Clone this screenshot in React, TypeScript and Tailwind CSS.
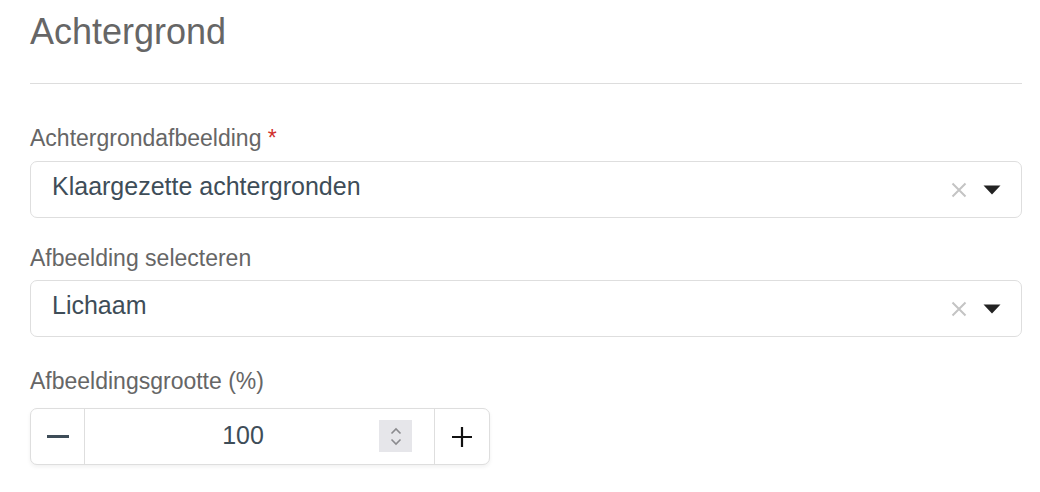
import React from "react";

function Caret() {
  return (
    <svg width="18" height="10" viewBox="0 0 18 10" className="block">
      <path d="M0.5 0.5 L17.5 0.5 L9 9.5 Z" fill="#222" />
    </svg>
  );
}

function Cross() {
  return (
    <svg width="16" height="16" viewBox="0 0 16 16" className="block">
      <path d="M1.5 1.5 L14.5 14.5 M14.5 1.5 L1.5 14.5" stroke="#c4c4c4" strokeWidth="2" />
    </svg>
  );
}

function SelectBox({ value }: { value: string }) {
  return (
    <div className="flex h-[57px] items-center rounded-[7px] border border-[#dedede] bg-white pl-[21px] pr-[20px]">
      <span className="mb-[7px] flex-1 text-[25px] leading-[30px] text-[#3e4d58]">{value}</span>
      <div className="mr-[16px]">
        <Cross />
      </div>
      <Caret />
    </div>
  );
}

export default function App() {
  return (
    <div
      className="min-h-[492px] w-[1040px] bg-white pl-[30px] pr-[18px]"
      style={{ fontFamily: '"Liberation Sans", Arial, sans-serif' }}
    >
      <div className="pt-[10px] text-[36px] leading-[44px] text-[#666]">Achtergrond</div>
      <div className="mt-[29px] h-px bg-[#dddddd]" />

      <div className="mt-[40px] text-[23px] leading-[28px] text-[#666]">
        Achtergrondafbeelding <span className="text-[#d0312d]">*</span>
      </div>
      <div className="mt-[9px]">
        <SelectBox value="Klaargezette achtergronden" />
      </div>

      <div className="mt-[26px] text-[23px] leading-[28px] text-[#666]">Afbeelding selecteren</div>
      <div className="mt-[8px]">
        <SelectBox value="Lichaam" />
      </div>

      <div className="mt-[30px] text-[23px] leading-[28px] text-[#666]">Afbeeldingsgrootte (%)</div>
      <div className="mt-[13px] flex h-[57px] w-[460px] rounded-[7px] border border-[#dedede] bg-white shadow-[0_2px_4px_rgba(0,0,0,0.06)]">
        <div className="flex w-[54px] items-center justify-center border-r border-[#dedede]">
          <div className="h-[3px] w-[22px] bg-[#3e4d58]" />
        </div>
        <div className="relative flex flex-1 items-center justify-center pr-[33px]">
          <span className="mb-[4px] text-[25px] leading-[30px] text-[#3e4d58]">100</span>
          <div className="absolute right-[22px] top-[11px] flex h-[32px] w-[33px] flex-col items-center justify-center gap-[3px] bg-[#e6e6ea]">
            <svg width="12" height="8" viewBox="0 0 12 8" className="block">
              <path d="M1.5 6.5 L6 2 L10.5 6.5" stroke="#8a8a8e" strokeWidth="1.6" fill="none" />
            </svg>
            <svg width="12" height="8" viewBox="0 0 12 8" className="block">
              <path d="M1.5 1.5 L6 6 L10.5 1.5" stroke="#8a8a8e" strokeWidth="1.6" fill="none" />
            </svg>
          </div>
        </div>
        <div className="flex w-[55px] items-center justify-center border-l border-[#dedede]">
          <svg width="20" height="20" viewBox="0 0 20 20" className="block">
            <path d="M10 0 V20 M0 10 H20" stroke="#111" strokeWidth="2.2" />
          </svg>
        </div>
      </div>
    </div>
  );
}
